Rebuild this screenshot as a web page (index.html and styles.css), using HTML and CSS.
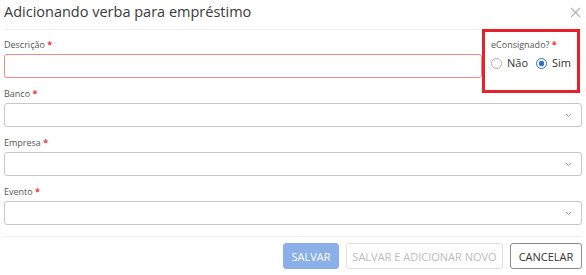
FILE: index.html
```html
<!DOCTYPE html>
<html lang="pt-BR">
<head>
<meta charset="utf-8">
<link rel="stylesheet" href="styles.css">
</head>
<body>
<div class="modal">
  <div class="header">
    <h1 class="title">Adicionando verba para empréstimo</h1>
    <span class="close">
      <svg width="11" height="11" viewBox="0 0 11 11"><path d="M1 1L10 10M10 1L1 10" stroke="#b5b5b5" stroke-width="1.3" fill="none"/></svg>
    </span>
  </div>
  <div class="body">
    <div class="row-top">
      <div class="field grow">
        <label class="label">Descrição <span class="req">*</span></label>
        <div class="input invalid"></div>
      </div>
      <div class="radio-box">
        <label class="label">eConsignado? <span class="req">*</span></label>
        <div class="radios">
          <span class="radio"><span class="circle"></span>Não</span>
          <span class="radio"><span class="circle checked"></span>Sim</span>
        </div>
      </div>
    </div>
    <div class="field">
      <label class="label">Banco <span class="req">*</span></label>
      <div class="input select"><svg class="chev" width="7" height="5" viewBox="0 0 7 5"><path d="M1 1L3.5 3.5L6 1" stroke="#999" stroke-width="1" fill="none"/></svg></div>
    </div>
    <div class="field">
      <label class="label">Empresa <span class="req">*</span></label>
      <div class="input select"><svg class="chev" width="7" height="5" viewBox="0 0 7 5"><path d="M1 1L3.5 3.5L6 1" stroke="#999" stroke-width="1" fill="none"/></svg></div>
    </div>
    <div class="field">
      <label class="label">Evento <span class="req">*</span></label>
      <div class="input select"><svg class="chev" width="7" height="5" viewBox="0 0 7 5"><path d="M1 1L3.5 3.5L6 1" stroke="#999" stroke-width="1" fill="none"/></svg></div>
    </div>
  </div>
  <div class="footer">
    <button class="btn primary">SALVAR</button>
    <button class="btn disabled">SALVAR E ADICIONAR NOVO</button>
    <button class="btn default">CANCELAR</button>
  </div>
</div>
</body>
</html>
```
FILE: styles.css
```css
* { box-sizing: border-box; }
html, body { margin: 0; padding: 0; background: #fff; }
body { font-family: "Open Sans", "Liberation Sans", sans-serif; color: #333; }
.modal { width: 586px; height: 275px; padding: 0 4px; }
.header {
  height: 30px;
  border-bottom: 1px solid #eeeeee;
  display: flex;
  align-items: flex-start;
  justify-content: space-between;
}
.title {
  margin: 0;
  padding-top: 1px;
  font-size: 14.5px;
  font-weight: 400;
  line-height: 22px;
  color: #3a3a3a;
}
.close { padding: 7px 1px 0 0; display: block; line-height: 0; }
.body { display: flex; flex-direction: column; gap: 9px; }
.row-top { display: flex; align-items: flex-start; margin-top: -1px; }
.grow { flex: 1; padding-top: 9px; }
.field { display: flex; flex-direction: column; }
.label {
  display: block;
  font-size: 9px;
  line-height: 14px;
  color: #555;
  margin-bottom: 2px;
}
.req { color: #e53935; font-weight: 700; }
.input {
  height: 24px;
  border: 1px solid #c8c8c8;
  border-radius: 3px;
  background: #fff;
}
.input.invalid { border-color: #ef8a8a; }
.select { display: flex; align-items: center; justify-content: flex-end; padding-right: 9px; }
.radio-box {
  width: 98px;
  height: 64px;
  margin-right: 2px;
  margin-bottom: -15px;
  border: 3px solid #e8202a;
  padding: 6px 0 0 6px;
}
.radios { display: flex; gap: 8px; align-items: center; margin-top: 3px; }
.radio { display: flex; align-items: center; gap: 5px; font-size: 11px; color: #333; line-height: 16px; }
.circle {
  width: 11px; height: 11px;
  border: 1px solid #b0b0b0;
  border-radius: 50%;
  display: inline-block;
  background: #fff;
}
.circle.checked {
  border-color: #2f6fd6;
  background: radial-gradient(circle, #2f6fd6 0 2.6px, #fff 3px);
}
.footer {
  margin-top: 11px;
  border-top: 1px solid #eeeeee;
  padding-top: 6px;
  display: flex;
  justify-content: flex-end;
  gap: 7px;
}
.btn {
  height: 26px;
  font-family: "Open Sans", "Liberation Sans", sans-serif;
  font-size: 11px;
  border-radius: 3px;
  padding: 0;
  white-space: nowrap;
  text-align: center;
  background: #fff;
  border: 1px solid #ddd;
}
.btn.primary { background: #8aafe9; border-color: #8aafe9; color: #fff; width: 56px; }
.btn.disabled { color: #bdbdbd; border-color: #e0e0e0; width: 157px; }
.btn.default { color: #333; border-color: #8a8a8a; width: 72px; }
```
